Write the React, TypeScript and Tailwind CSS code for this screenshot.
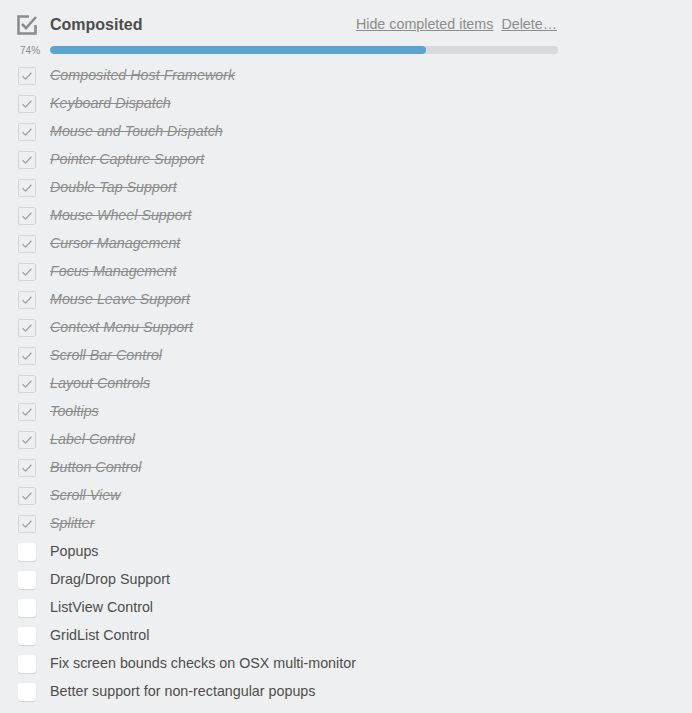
const items: { title: string; done: boolean }[] = [
  { title: "Composited Host Framework", done: true },
  { title: "Keyboard Dispatch", done: true },
  { title: "Mouse and Touch Dispatch", done: true },
  { title: "Pointer Capture Support", done: true },
  { title: "Double Tap Support", done: true },
  { title: "Mouse Wheel Support", done: true },
  { title: "Cursor Management", done: true },
  { title: "Focus Management", done: true },
  { title: "Mouse Leave Support", done: true },
  { title: "Context Menu Support", done: true },
  { title: "Scroll Bar Control", done: true },
  { title: "Layout Controls", done: true },
  { title: "Tooltips", done: true },
  { title: "Label Control", done: true },
  { title: "Button Control", done: true },
  { title: "Scroll View", done: true },
  { title: "Splitter", done: true },
  { title: "Popups", done: false },
  { title: "Drag/Drop Support", done: false },
  { title: "ListView Control", done: false },
  { title: "GridList Control", done: false },
  { title: "Fix screen bounds checks on OSX multi-monitor", done: false },
  { title: "Better support for non-rectangular popups", done: false },
];

function SmallCheck() {
  return (
    <svg width="12" height="10" viewBox="0 0 12 10" fill="none">
      <path d="M1.5 5.2 L4.5 8 L10.5 1.8" stroke="#a3a3a3" strokeWidth="1.3" />
    </svg>
  );
}

export default function App() {
  const done = items.filter((i) => i.done).length;
  const pct = Math.round((done / items.length) * 100);

  return (
    <div
      className="min-h-[713px] w-[692px] bg-[#edeff0] text-[#4d4d4d]"
      style={{ fontFamily: '"Liberation Sans", Arial, sans-serif' }}
    >
      <div className="w-[558px] pt-[13px]">
        {/* header */}
        <div className="flex h-[24px] items-center">
          <div className="flex w-[50px] justify-start pl-[16px]">
            <svg width="22" height="22" viewBox="0 0 22 22" fill="none">
              <path
                d="M13 2.5 H2.5 V19.5 H19.5 V11"
                stroke="#8c8c8c"
                strokeWidth="2.6"
              />
              <path d="M6 10 L10 14 L20 3" stroke="#8c8c8c" strokeWidth="2.6" />
            </svg>
          </div>
          <h2 className="text-[16px] font-bold text-[#4d4d4d]">Composited</h2>
          <div className="ml-auto flex gap-[8px] pr-[1px] text-[14.3px] text-[#8c8c8c]">
            <a className="underline">Hide completed items</a>
            <a className="underline">Delete…</a>
          </div>
        </div>

        {/* progress */}
        <div className="mt-[1px] flex h-[24px] items-center">
          <span className="w-[50px] pl-[20px] text-[10px] text-[#8c8c8c]">
            {pct}%
          </span>
          <div className="h-[8px] flex-1 overflow-hidden rounded-full bg-[#d6dadc]">
            <div
              className="h-full rounded-full bg-[#5ba4cf]"
              style={{ width: `${pct}%` }}
            />
          </div>
        </div>
      </div>

      {/* items */}
      <ul>
        {items.map((it) => (
          <li key={it.title} className="flex h-[28px] items-center">
            <div className="flex w-[50px] pl-[18px]">
              {it.done ? (
                <span className="flex h-[18px] w-[18px] items-center justify-center rounded-[2px] border border-[#d3d5d7]">
                  <SmallCheck />
                </span>
              ) : (
                <span className="h-[18px] w-[18px] rounded-[3px] bg-white shadow-[0_1px_1px_rgba(0,0,0,0.12)]" />
              )}
            </div>
            <span
              className={
                it.done
                  ? "text-[14.3px] italic text-[#8c8c8c] line-through"
                  : "text-[14.3px] text-[#4d4d4d]"
              }
            >
              {it.title}
            </span>
          </li>
        ))}
      </ul>
    </div>
  );
}
